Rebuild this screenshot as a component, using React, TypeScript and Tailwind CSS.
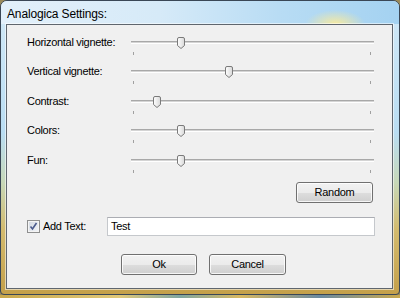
import React from 'react';

// Analogica settings dialog, Win7 Aero look

type Slider = { label: string; thumb: number };

const sliders: Slider[] = [
  { label: 'Horizontal vignette:', thumb: 49 },
  { label: 'Vertical vignette:', thumb: 97 },
  { label: 'Contrast:', thumb: 25 },
  { label: 'Colors:', thumb: 49 },
  { label: 'Fun:', thumb: 49 },
];

function Thumb() {
  return (
    <svg width="8" height="12" viewBox="0 0 8 12">
      <defs>
        <linearGradient id="thumbFill" x1="0" y1="0" x2="1" y2="0">
          <stop offset="0" stopColor="#ffffff" />
          <stop offset="1" stopColor="#d8d8d8" />
        </linearGradient>
      </defs>
      <path
        d="M0.5 2 Q0.5 0.5 2 0.5 H6 Q7.5 0.5 7.5 2 V8.5 L4 11.5 L0.5 8.5 Z"
        fill="url(#thumbFill)"
        stroke="#7a7a7a"
        strokeWidth="1"
      />
    </svg>
  );
}

function SliderRow({ label, thumb }: Slider) {
  return (
    <div className="flex h-[29.4px]">
      <div className="w-[101px] pt-[3px] leading-[13px]">{label}</div>
      <div className="flex w-[249px] flex-col pt-[4px]">
        <div className="relative h-[11px]">
          <div className="mx-[3px] mt-[4px] h-[3px] border-t border-[#a8a8a8] border-b border-b-white bg-[#d4d4d4]" />
          <div className="absolute top-0" style={{ left: thumb }}>
            <Thumb />
          </div>
        </div>
        <div className="mt-[4px] flex justify-between pl-[5px] pr-[6px]">
          <div className="h-[3px] w-px bg-[#a0a0a0]" />
          <div className="h-[3px] w-px bg-[#a0a0a0]" />
        </div>
      </div>
    </div>
  );
}

function Button({ label, w }: { label: string; w: string }) {
  return (
    <div
      className={`${w} flex h-[21px] items-center justify-center rounded-[3px] border border-[#707070] bg-[linear-gradient(to_bottom,#f2f2f2_0%,#ebebeb_50%,#dddddd_51%,#cfcfcf_100%)] shadow-[inset_0_0_0_1px_rgba(255,255,255,0.8)]`}
    >
      {label}
    </div>
  );
}

export default function App() {
  return (
    <div className="h-[298px] w-[400px] overflow-hidden bg-[#9a8a5a] font-['Liberation_Sans',Arial,sans-serif] text-[11px] tracking-[-0.3px] text-black">
      <div className="flex h-[295px] w-[400px] flex-col rounded-t-[7px] rounded-b-[4px] border border-[#3a4756] bg-[linear-gradient(to_bottom,#d2e9f7_0%,#b9ddf3_45%,#c7d8b8_62%,#d3bb6e_78%,#c4a04a_100%)]">
        {/* Title bar */}
        <div className="flex h-[23px] items-center rounded-t-[6px] bg-[radial-gradient(ellipse_30px_14px_at_84%_100%,rgba(255,236,150,0.9),transparent),linear-gradient(to_right,#e3f0fa_0%,#d6eaf8_40%,#b8dcf4_70%,#a4d2f1_100%)] pl-[6px] pt-[2px]">
          <span className="text-[12px] tracking-[-0.15px] text-black">Analogica Settings:</span>
        </div>

        {/* Client area */}
        <div className="ml-[5px] mr-[6px] flex h-[265px] flex-col border border-[#5f666e] bg-[#f0f0f0] shadow-[0_0_0_1px_rgba(255,255,255,0.55)]">
          <div className="flex flex-col pl-[20px] pt-[8px]">
            {sliders.map((s) => (
              <SliderRow key={s.label} label={s.label} thumb={s.thumb} />
            ))}
          </div>

          <div className="mt-[2px] flex justify-end pr-[19px]">
            <Button label="Random" w="w-[77px]" />
          </div>

          <div className="mt-[14px] flex h-[19px] items-center pl-[20px]">
            <div className="flex h-[13px] w-[13px] items-center justify-center border border-[#8e8f8f] bg-[linear-gradient(to_bottom_right,#cfd6e0,#f4f6f9)] shadow-[inset_0_0_0_1px_#f4f4f4]">
              <svg width="9" height="9" viewBox="0 0 9 9">
                <path d="M1.5 4.5 L3.5 7 L7.5 1" fill="none" stroke="#4a5a8c" strokeWidth="1.6" />
              </svg>
            </div>
            <span className="ml-[3px] w-[64px]">Add Text:</span>
            <div className="flex h-[19px] w-[268px] items-center border border-[#c5c8cc] border-t-[#abadb3] bg-white pl-[3px]">
              Test
            </div>
          </div>

          <div className="mt-[18px] flex gap-[12px] pl-[114px]">
            <Button label="Ok" w="w-[76px]" />
            <Button label="Cancel" w="w-[77px]" />
          </div>
        </div>
      </div>
      <div className="h-[3px] w-[400px] bg-[linear-gradient(to_right,#c9a84c,#e0c878_30%,#7fa6a0_45%,#d8b860_60%,#6a8aa0_80%,#c9a84c)]" />
    </div>
  );
}
